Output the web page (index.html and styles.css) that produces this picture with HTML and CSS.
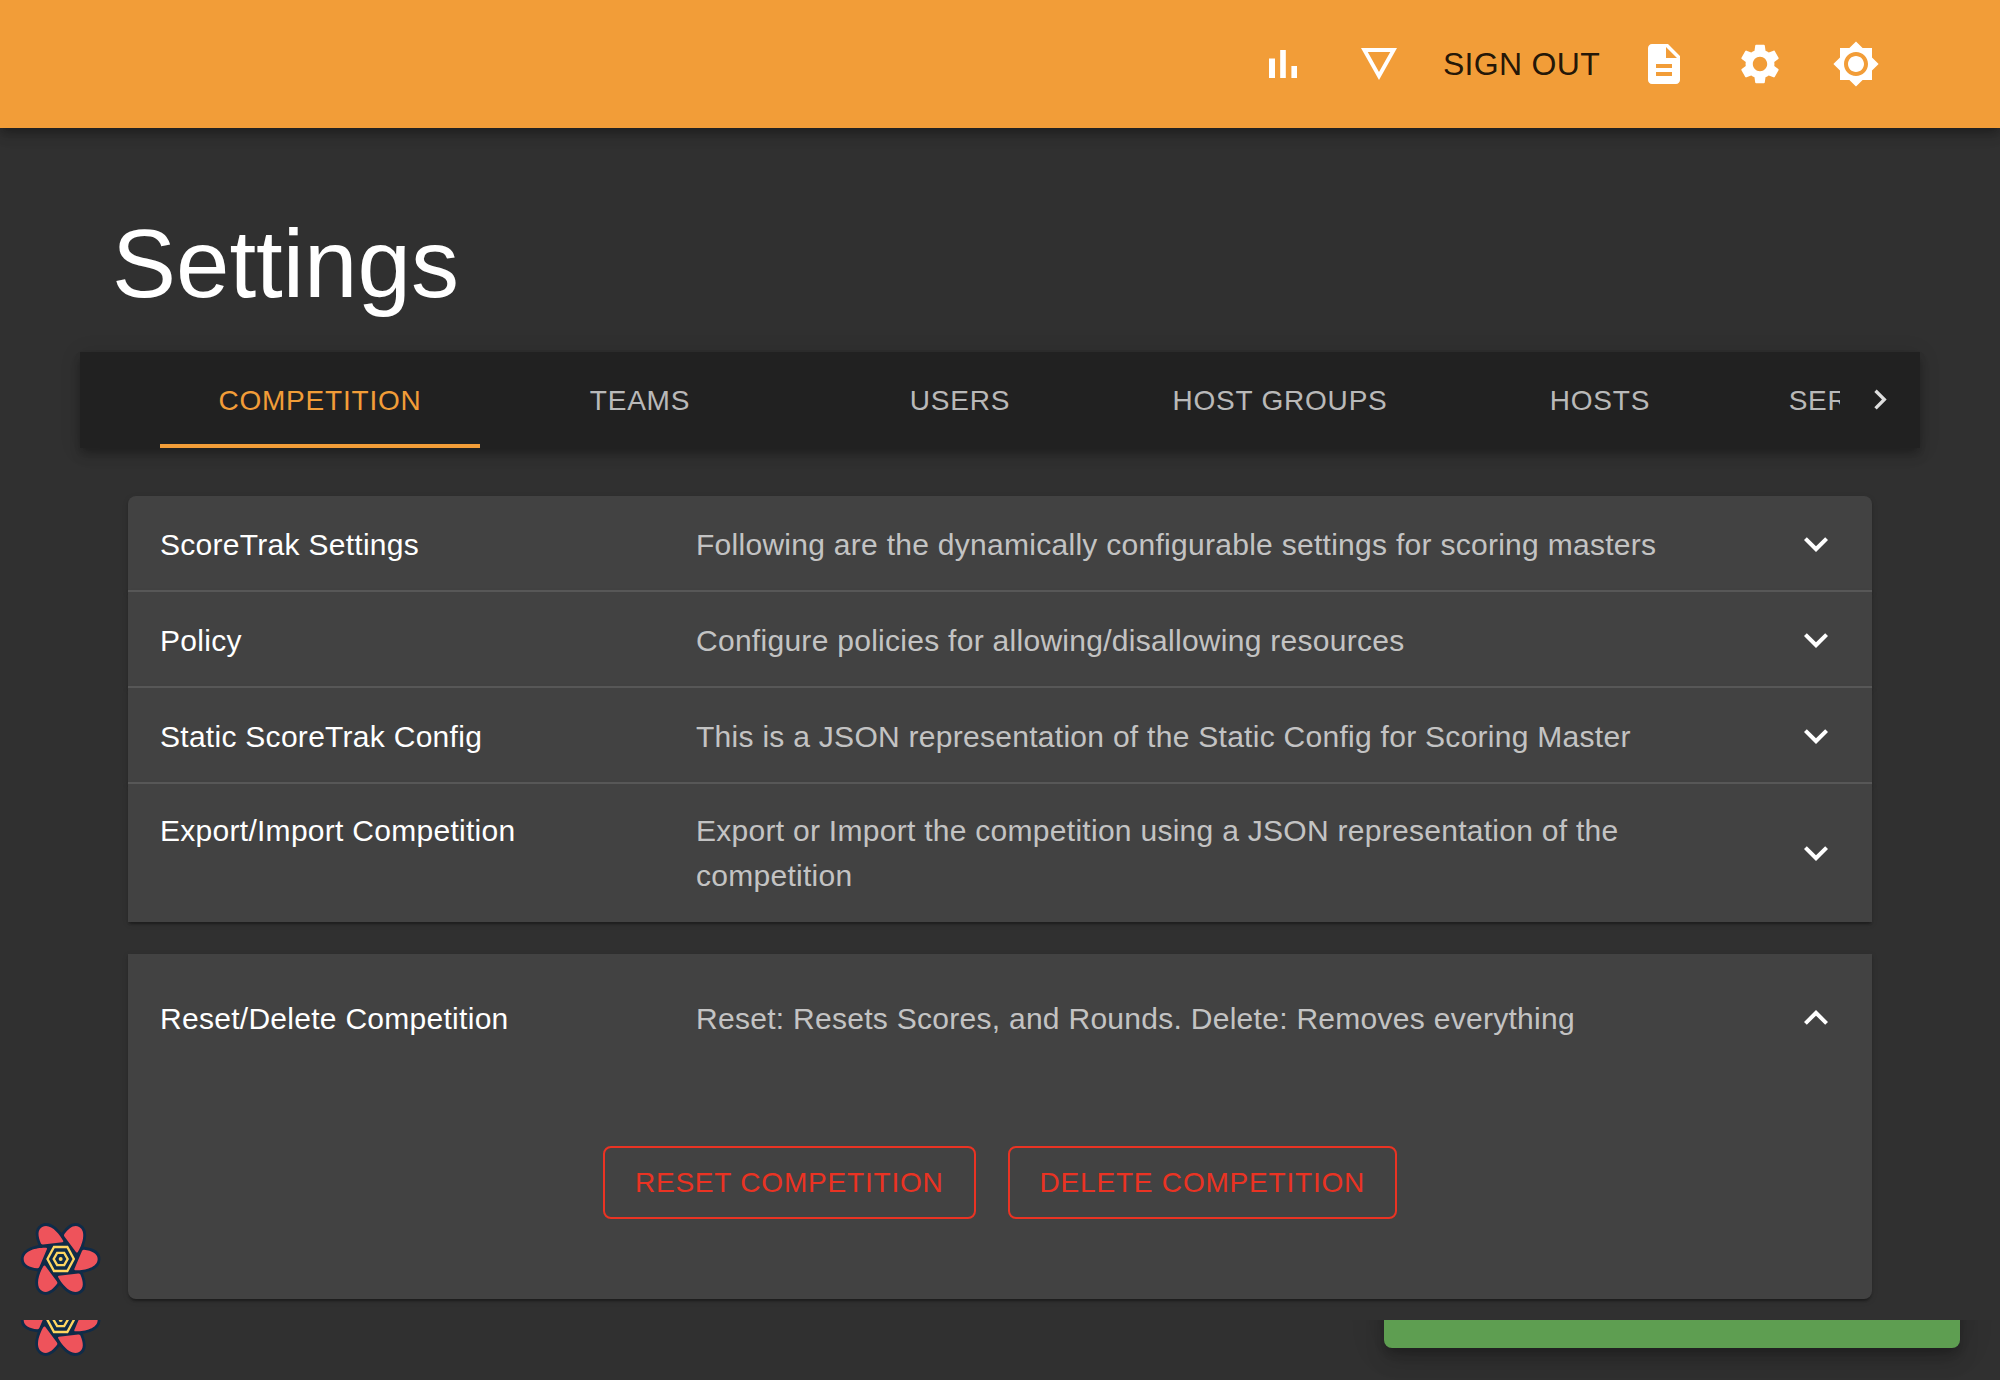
FILE: index.html
```html
<!DOCTYPE html>
<html lang="en">
<head>
<meta charset="utf-8">
<title>Settings</title>
<link rel="stylesheet" href="styles.css">
</head>
<body>
<svg class="defs" width="0" height="0" aria-hidden="true">
  <defs>
    <path id="petal" d="M-44-34C-68-35-111-27-111 0C-111 17-94 25-70 28Q-66 28-64 24L-41-30Q-40-34-44-34Z"/>
    <g id="petals">
      <use href="#petal"/>
      <use href="#petal" transform="rotate(60)"/>
      <use href="#petal" transform="rotate(120)"/>
      <use href="#petal" transform="rotate(180)"/>
      <use href="#petal" transform="rotate(240)"/>
      <use href="#petal" transform="rotate(300)"/>
    </g>
    <symbol id="flower" viewBox="-122 -111 244 222">
      <g fill="#0f2b48" stroke="#0f2b48" stroke-width="17" stroke-linejoin="round"><use href="#petals"/></g>
      <circle r="54" fill="#0f2b48"/>
      <g fill="#ee535b"><use href="#petals"/></g>
      <path d="M-39.500 0L-20-36H20L39.500 0L20 36H-20Z" fill="#0f2b48" stroke="#ffd661" stroke-width="7"/>
      <path d="M-21 0L-10.500-18.500H10.500L21 0L10.500 18.500H-10.500Z" fill="#0f2b48" stroke="#ffd661" stroke-width="7"/>
      <circle r="6" fill="#ffd661"/>
    </symbol>
    <symbol id="expand" viewBox="0 0 24 24"><path d="M16.590 8.590L12 13.170 7.410 8.590 6 10l6 6 6-6z"/></symbol>
  </defs>
</svg>

<header class="appbar">
  <a class="icon-button"><svg class="icon" viewBox="0 0 24 24"><path d="M5 9.200h3V19H5zM10.600 5h2.800v14h-2.800zm5.600 8H19v6h-2.800z"/></svg></a>
  <a class="icon-button"><svg class="icon" viewBox="0 0 24 24"><path d="M3 4l9 16 9-16H3zm3.380 2h11.250L12 16 6.380 6z"/></svg></a>
  <a class="sign-out">SIGN OUT</a>
  <a class="icon-button"><svg class="icon" viewBox="0 0 24 24"><path d="M14 2H6c-1.100 0-1.990.9-1.990 2L4 20c0 1.100.89 2 1.990 2H18c1.100 0 2-.9 2-2V8l-6-6zm2 16H8v-2h8v2zm0-4H8v-2h8v2zm-3-5V3.500L18.500 9H13z"/></svg></a>
  <a class="icon-button"><svg class="icon" viewBox="0 0 24 24"><path d="M19.140 12.940c.04-.3.060-.61.060-.94 0-.32-.02-.64-.07-.94l2.030-1.580c.18-.14.23-.41.12-.61l-1.920-3.320c-.12-.22-.37-.29-.59-.22l-2.390.96c-.5-.38-1.030-.7-1.620-.94l-.36-2.540c-.04-.24-.24-.41-.48-.41h-3.840c-.24 0-.43.17-.47.41l-.36 2.540c-.59.24-1.130.57-1.620.94l-2.390-.96c-.22-.08-.47 0-.59.22L2.740 8.870c-.12.21-.08.47.12.61l2.030 1.580c-.05.3-.09.63-.09.94s.02.64.07.94l-2.030 1.580c-.18.14-.23.41-.12.61l1.920 3.320c.12.22.37.29.59.22l2.390-.96c.5.38 1.030.7 1.620.94l.36 2.540c.05.24.24.41.48.41h3.840c.24 0 .44-.17.47-.41l.36-2.540c.59-.24 1.130-.56 1.620-.94l2.390.96c.22.08.47 0 .59-.22l1.920-3.320c.12-.22.070-.47-.12-.61l-2.010-1.580zM12 15.600c-1.980 0-3.600-1.620-3.600-3.600s1.620-3.600 3.600-3.600 3.600 1.620 3.600 3.600-1.620 3.600-3.600 3.600z"/></svg></a>
  <a class="icon-button"><svg class="icon" viewBox="0 0 24 24"><path d="M20 8.690V4h-4.690L12 .69 8.690 4H4v4.690L.69 12 4 15.310V20h4.690L12 23.310 15.310 20H20v-4.690L23.310 12 20 8.690zM12 18c-3.310 0-6-2.690-6-6s2.690-6 6-6 6 2.690 6 6-2.690 6-6 6zm0-10c-2.210 0-4 1.790-4 4s1.790 4 4 4 4-1.790 4-4-1.790-4-4-4z"/></svg></a>
</header>

<main class="page">
  <h1 class="title">Settings</h1>

  <nav class="tabs">
    <div class="tabs-scroller">
      <a class="tab tab-selected">COMPETITION</a>
      <a class="tab">TEAMS</a>
      <a class="tab">USERS</a>
      <a class="tab">HOST GROUPS</a>
      <a class="tab">HOSTS</a>
      <a class="tab">SERVICE GROUPS</a>
    </div>
    <a class="tabs-next"><svg class="icon-small" viewBox="0 0 24 24"><path d="M8.590 16.340l4.580-4.590-4.580-4.590L10 5.750l6 6-6 6z"/></svg></a>
  </nav>

  <div class="panels">
    <section class="panel panel-first">
      <div class="summary"><p class="name">ScoreTrak Settings</p><p class="about">Following are the dynamically configurable settings for scoring masters</p><svg class="icon"><use href="#expand"/></svg></div>
    </section>
    <section class="panel panel-divided">
      <div class="summary"><p class="name">Policy</p><p class="about">Configure policies for allowing/disallowing resources</p><svg class="icon"><use href="#expand"/></svg></div>
    </section>
    <section class="panel panel-divided">
      <div class="summary"><p class="name">Static ScoreTrak Config</p><p class="about">This is a JSON representation of the Static Config for Scoring Master</p><svg class="icon"><use href="#expand"/></svg></div>
    </section>
    <section class="panel panel-divided">
      <div class="summary"><p class="name name-top">Export/Import Competition</p><p class="about">Export or Import the competition using a JSON representation of the competition</p><svg class="icon"><use href="#expand"/></svg></div>
    </section>
    <section class="panel panel-expanded">
      <div class="summary"><p class="name">Reset/Delete Competition</p><p class="about">Reset: Resets Scores, and Rounds. Delete: Removes everything</p><svg class="icon icon-up"><use href="#expand"/></svg></div>
      <div class="details">
        <button class="danger">RESET COMPETITION</button>
        <button class="danger">DELETE COMPETITION</button>
      </div>
    </section>
  </div>
</main>

<svg class="flower"><use href="#flower"/></svg>
<footer class="strip">
  <svg class="strip-flower"><use href="#flower"/></svg>
  <div class="snackbar"></div>
</footer>
</body>
</html>
```
FILE: styles.css
```css
* { box-sizing: border-box; }

body {
  margin: 0;
  position: relative;
  height: 1380px;
  overflow: hidden;
  background: #303030;
  color: #fff;
  font-family: "Liberation Sans", Arial, sans-serif;
  font-size: 30px;
}

.defs { position: absolute; }

.icon { flex: none; width: 48px; height: 48px; fill: #fff; }
.icon-small { width: 40px; height: 40px; fill: #fff; }
.icon-up { transform: rotate(180deg); }

.appbar {
  position: relative;
  display: flex;
  justify-content: flex-end;
  align-items: center;
  height: 128px;
  padding-right: 96px;
  background: #f29d38;
  box-shadow: 0 4px 8px -2px rgba(0,0,0,.2), 0 8px 10px rgba(0,0,0,.14), 0 2px 20px rgba(0,0,0,.12);
}
.icon-button { display: flex; padding: 24px; }
.sign-out {
  width: 189px;
  text-align: center;
  white-space: nowrap;
  color: rgba(0,0,0,.87);
  font-size: 32px;
  line-height: 48px;
  letter-spacing: .3px;
}

.page { padding: 80px 80px 0; }
.title {
  height: 112px;
  margin: 0 0 32px;
  padding-left: 32px;
  font-size: 96px;
  font-weight: 400;
  line-height: 112px;
}

.tabs {
  display: flex;
  height: 96px;
  margin: 0;
  padding-left: 80px;
  background: #212121;
  box-shadow: 0 4px 8px -2px rgba(0,0,0,.2), 0 8px 10px rgba(0,0,0,.14), 0 2px 20px rgba(0,0,0,.12);
}
.tabs-scroller { display: flex; flex: 1; min-width: 0; overflow: hidden; }
.tab {
  flex: none;
  width: 320px;
  height: 96px;
  color: rgba(255,255,255,.7);
  font-size: 28px;
  line-height: 98px;
  letter-spacing: .8px;
  text-align: center;
}
.tab-selected { color: #f29d38; box-shadow: inset 0 -4px #f29d38; }
.tabs-next { display: flex; align-items: center; justify-content: center; width: 80px; opacity: .85; }

.panels { padding: 48px 48px 0; }
.panel {
  background: #424242;
  box-shadow: 0 4px 2px -2px rgba(0,0,0,.2), 0 2px 2px rgba(0,0,0,.14), 0 2px 6px rgba(0,0,0,.12);
}
.panel-first { border-radius: 8px 8px 0 0; }
.panel-divided { position: relative; }
.panel-divided::before {
  content: "";
  position: absolute;
  inset: -2px 0 auto;
  height: 2px;
  background: #575757;
}
.panel-expanded { margin-top: 32px; border-radius: 0 0 8px 8px; }
.summary { display: flex; align-items: center; min-height: 96px; padding: 24px 32px; }
.panel-expanded .summary { min-height: 128px; }
.name, .about { margin: 0; line-height: 45px; letter-spacing: .28px; }
.name { flex: none; width: 536px; }
.name-top { align-self: flex-start; }
.about { flex: none; width: 1072px; margin-right: 24px; color: rgba(255,255,255,.7); }

.details { display: flex; justify-content: center; gap: 32px; padding: 64px 32px 80px; }
.danger {
  height: 73px;
  padding: 0 30px;
  border: 2px solid #ea3323;
  border-radius: 8px;
  background: none;
  color: #ea3323;
  font: 28px "Liberation Sans", Arial, sans-serif;
  letter-spacing: .8px;
}

.flower { position: absolute; left: 20.300px; top: 1222px; width: 81.330px; height: 74px; }
.strip { position: absolute; left: 0; right: 0; top: 1320px; height: 60px; overflow: hidden; }
.strip-flower { position: absolute; left: 20.300px; top: -37px; width: 81.330px; height: 74px; }
.snackbar {
  position: absolute;
  right: 40px;
  top: -68px;
  width: 576px;
  height: 96px;
  border-radius: 8px;
  background: #5e9e51;
  box-shadow: 0 6px 10px -2px rgba(0,0,0,.2), 0 12px 20px rgba(0,0,0,.14), 0 2px 36px rgba(0,0,0,.12);
}
```
